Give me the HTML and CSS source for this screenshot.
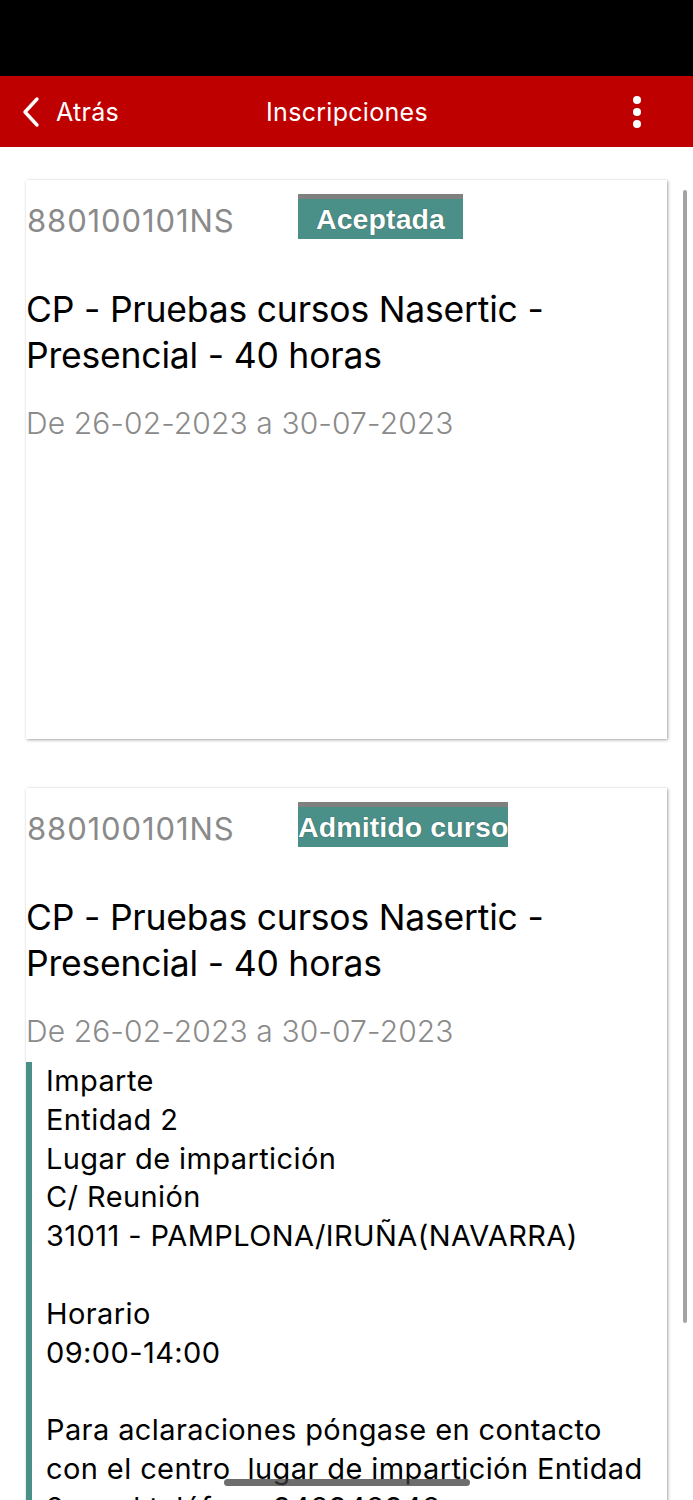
FILE: index.html
```html
<!DOCTYPE html>
<html lang="es">
<head>
<meta charset="utf-8">
<title>Inscripciones</title>
<link rel="stylesheet" href="styles.css">
</head>
<body>
<div class="screen">
  <div class="statusbar"></div>
  <header class="navbar">
    <div class="nav-back">
      <svg class="chev" width="20" height="32" viewBox="0 0 20 32"><path d="M16 3 L4 16 L16 29" fill="none" stroke="#fff" stroke-width="3.4" stroke-linecap="round" stroke-linejoin="round"/></svg>
      <span>Atrás</span>
    </div>
    <div class="nav-title">Inscripciones</div>
    <div class="nav-menu">
      <span class="dot"></span><span class="dot"></span><span class="dot"></span>
    </div>
  </header>
  <main class="content">
    <article class="card">
      <div class="card-head">
        <span class="code">880100101NS</span>
        <span class="badge">Aceptada</span>
      </div>
      <h2 class="title">CP - Pruebas cursos Nasertic - Presencial - 40 horas</h2>
      <p class="dates">De 26-02-2023 a 30-07-2023</p>
    </article>
    <article class="card">
      <div class="card-head">
        <span class="code">880100101NS</span>
        <span class="badge">Admitido curso</span>
      </div>
      <h2 class="title">CP - Pruebas cursos Nasertic - Presencial - 40 horas</h2>
      <p class="dates">De 26-02-2023 a 30-07-2023</p>
      <div class="info">Imparte<br>Entidad 2<br>Lugar de impartición<br>C/ Reunión<br>31011 - PAMPLONA/IRUÑA(NAVARRA)<br><br>Horario<br>09:00-14:00<br><br>Para aclaraciones póngase en contacto con el centro  lugar de impartición Entidad 2 en el teléfono 948948948</div>
    </article>
  </main>
  <div class="scrollbar"></div>
  <div class="home-indicator"></div>
</div>
</body>
</html>
```

FILE: styles.css
```css
* { box-sizing: border-box; }
html, body { margin: 0; padding: 0; }
body {
  width: 693px;
  height: 1500px;
  overflow: hidden;
  background: #fff;
  font-family: Inter, "Noto Sans", sans-serif;
}
.screen {
  position: relative;
  width: 693px;
  height: 1500px;
  overflow: hidden;
}
.statusbar {
  height: 76px;
  background: #000;
}
.navbar {
  height: 71px;
  background: #bf0000;
  display: grid;
  grid-template-columns: 1fr auto 1fr;
  align-items: center;
  color: #fff;
  padding: 0 20px 0 21px;
}
.nav-back {
  display: flex;
  align-items: center;
  gap: 15px;
  font-size: 25px;
  letter-spacing: 0.3px;
}
.chev { display: block; }
.nav-title {
  font-size: 25px;
  text-align: center;
  letter-spacing: 0.3px;
}
.nav-menu {
  justify-self: end;
  display: flex;
  flex-direction: column;
  gap: 4px;
  margin-right: 32px;
}
.dot {
  width: 8px;
  height: 8px;
  border-radius: 50%;
  background: #fff;
}
.content {
  padding: 33px 26px 0 26px;
  display: flex;
  flex-direction: column;
  gap: 49px;
}
.card {
  background: #fff;
  min-height: 559px;
  box-shadow: 1px 1px 3px rgba(0,0,0,0.35), 0 0 1px rgba(0,0,0,0.08);
  padding-top: 14px;
}
.card-head {
  display: flex;
  align-items: flex-start;
}
.code {
  width: 272px;
  padding-left: 1px;
  margin-top: 8px;
  font-size: 31px;
  color: #8a8a8a;
  letter-spacing: 0.9px;
}
.badge {
  min-width: 165px;
  height: 45px;
  background: #4a9088;
  border-top: 5px solid #808080;
  color: #fff;
  font-family: "Liberation Sans", Arial, sans-serif;
  font-weight: bold;
  font-size: 28.5px;
  line-height: 41px;
  text-align: center;
  letter-spacing: 0.1px;
  text-shadow: 0 0 1px rgba(0,0,0,0.6);
}
.title {
  margin: 48px 0 0 0;
  font-weight: 400;
  font-size: 35.5px;
  line-height: 46px;
  color: #000;
  letter-spacing: -0.2px;
}
.dates {
  margin: 24px 0 0 0;
  font-size: 30px;
  font-weight: 300;
  color: #8a8a8a;
  line-height: 40px;
  letter-spacing: 0.1px;
}
.info {
  margin-top: 11px;
  border-left: 6px solid #4a9088;
  padding-left: 14px;
  padding-right: 22px;
  font-size: 29px;
  line-height: 38.8px;
  color: #000;
  letter-spacing: 0.4px;
  white-space: pre-wrap;
}
.scrollbar {
  position: absolute;
  left: 683px;
  top: 190px;
  width: 4px;
  height: 1133px;
  border-radius: 2px;
  background: #a3a3a3;
}
.home-indicator {
  position: absolute;
  left: 224px;
  top: 1479px;
  width: 246px;
  height: 7px;
  border-radius: 4px;
  background: rgba(60,60,60,0.75);
}
```
